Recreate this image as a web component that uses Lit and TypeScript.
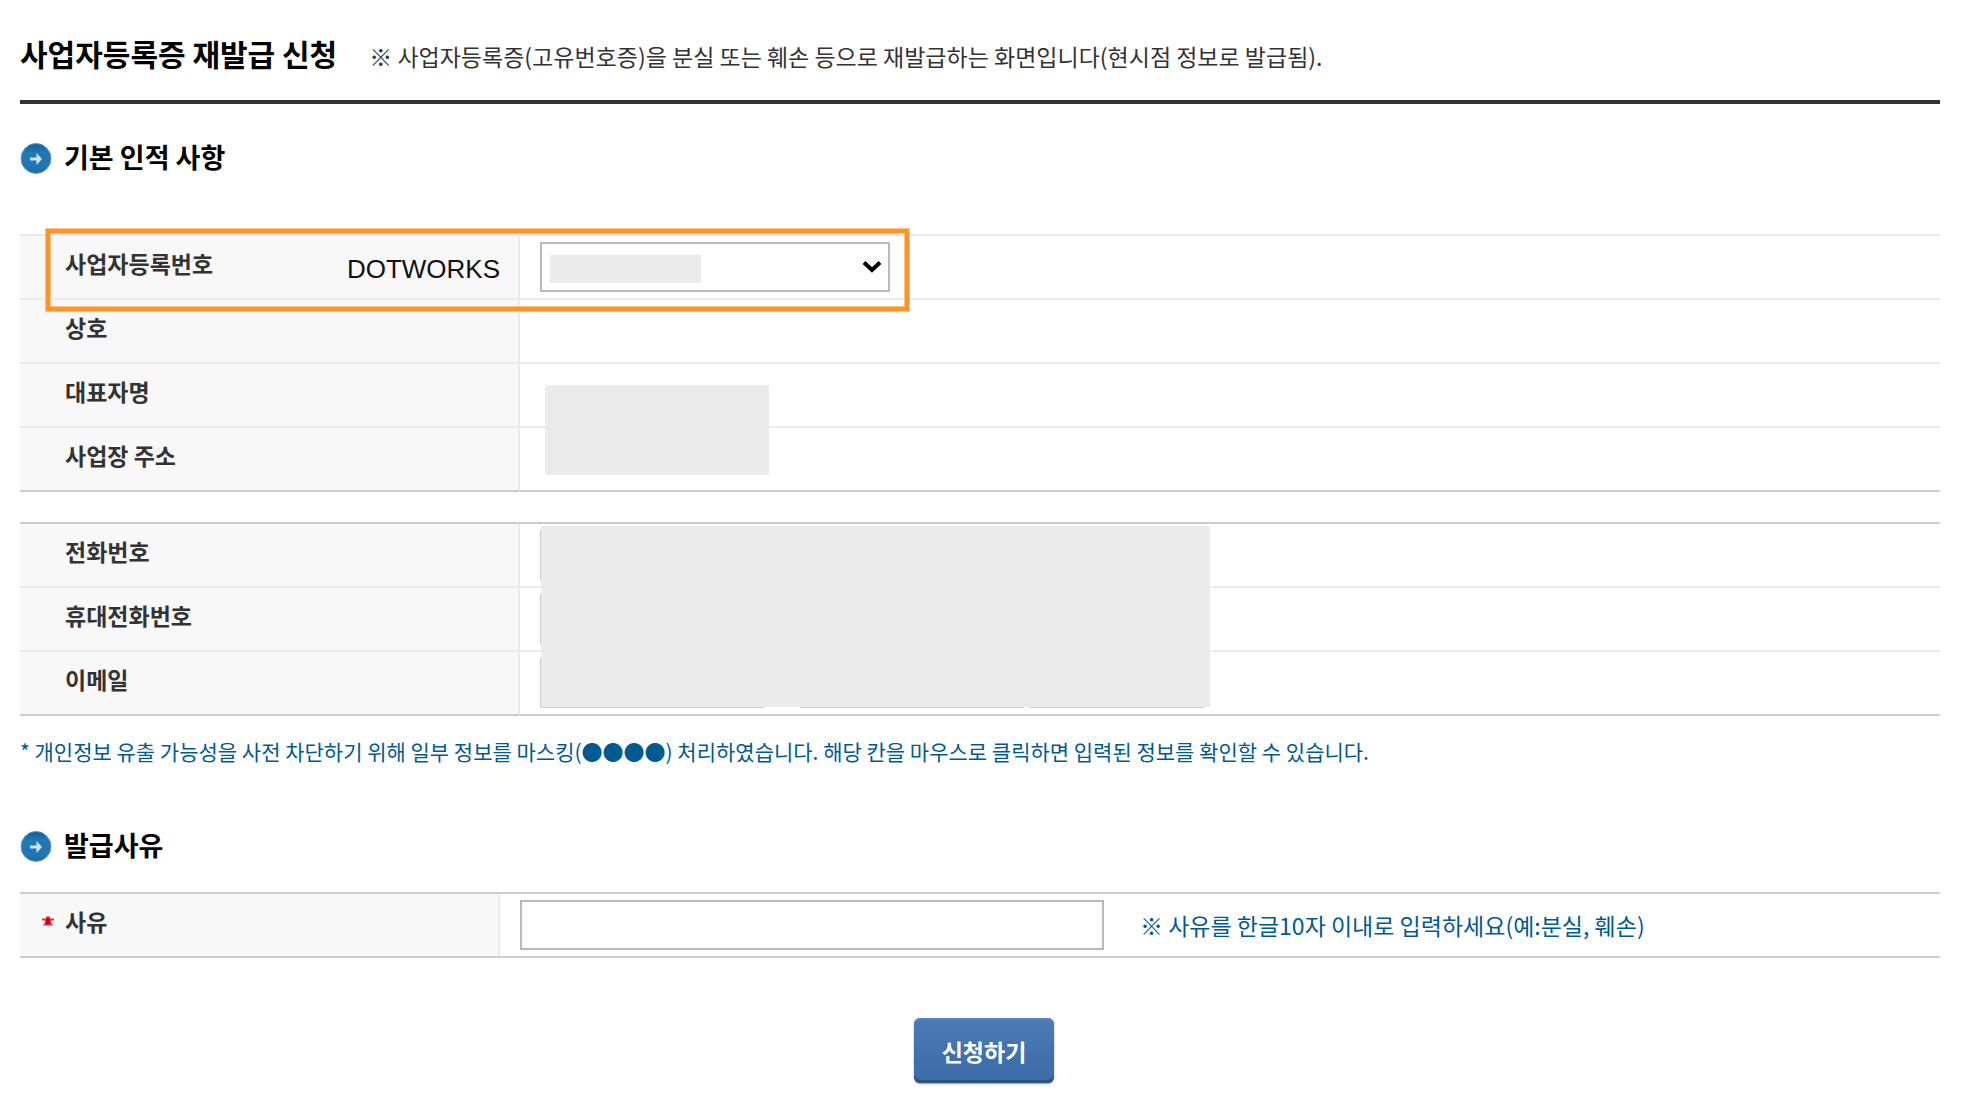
import { LitElement, html, css, svg } from "lit";
import { customElement, state } from "lit/decorators.js";

@customElement("section-heading")
class SectionHeading extends LitElement {
  static styles = css`
    :host {
      display: block;
    }
    .heading {
      display: flex;
      align-items: center;
      gap: 12px;
      margin: 0;
      height: 32px;
      font-size: 27px;
      line-height: 32px;
      font-weight: 700;
      color: #000;
    }
    .icon {
      width: 32px;
      height: 32px;
      flex: none;
    }
    .text {
      padding-bottom: 3px;
    }
  `;
  render() {
    return html`<h2 class="heading">
      <svg class="icon" viewBox="0 0 32 32" aria-hidden="true">
        <defs>
          <linearGradient id="g" x1="0" y1="0" x2="0" y2="1">
            <stop offset="0" stop-color="#17598c" />
            <stop offset="0.3" stop-color="#2278b5" />
            <stop offset="0.8" stop-color="#1f76b5" />
            <stop offset="1" stop-color="#1a65a0" />
          </linearGradient>
        </defs>
        <circle cx="16" cy="16.500" r="15" fill="url(#g)" stroke="#5c9bc9" stroke-width="1" />
        <path d="M10 15.500h6.500v-4.500l5.500 6-5.500 6v-4.500H10z" fill="#cfe4f3" />
      </svg>
      <span class="text"><slot></slot></span>
    </h2>`;
  }
}

@customElement("app-root")
class AppRoot extends LitElement {
  @state() reason = "";

  static styles = css`
    :host {
      display: block;
      box-sizing: border-box;
      padding: 30px 36px 18px 20px;
      background: #fff;
      color: #333;
      font-family: "Noto Sans CJK KR", "Liberation Sans", sans-serif;
      font-size: 23px;
      line-height: 32px;
    }
    .title-bar {
      display: flex;
      align-items: baseline;
      gap: 32px;
      height: 70px;
      border-bottom: 4px solid #333;
    }
    .title {
      margin: 0;
      font-size: 30px;
      line-height: 46px;
      font-weight: 700;
      color: #000;
    }
    .subtitle {
      margin: 0;
    }
    .first {
      margin-top: 38px;
    }
    .panel {
      position: relative;
    }
    .basic {
      margin-top: 60px;
    }
    .contact {
      margin-top: 30px;
    }
    .reason {
      margin-top: 30px;
    }
    table {
      width: 100%;
      border-collapse: separate;
      border-spacing: 0;
      table-layout: fixed;
      border-top: 2px solid #ccc;
    }
    .basic table {
      border-top-color: #ebebeb;
    }
    .label-col {
      width: 500px;
    }
    .reason .label-col {
      width: 480px;
    }
    th,
    td {
      box-sizing: border-box;
      height: 64px;
      padding: 0;
      border-bottom: 2px solid #ebebeb;
      vertical-align: middle;
    }
    tr:last-child th,
    tr:last-child td {
      border-bottom-color: #ccc;
    }
    th {
      padding: 0 18px 8px 45px;
      border-right: 2px solid #ebebeb;
      background: #f8f8f8;
      text-align: left;
      font-weight: 700;
    }
    td {
      padding: 0 20px;
    }
    .split {
      display: flex;
      align-items: center;
      justify-content: space-between;
    }
    .company {
      padding-top: 12px;
      font: 400 26px/32px "Liberation Sans", sans-serif;
      color: #111;
    }
    .required {
      display: flex;
      align-items: center;
      gap: 11px;
      margin-left: -23px;
    }
    .star {
      width: 12px;
      height: 10px;
    }
    .field-row {
      display: flex;
      align-items: center;
      gap: 6px;
    }
    .wide-gap {
      margin-left: 30px;
    }
    input,
    select {
      box-sizing: border-box;
      height: 50px;
      margin: 0;
      padding: 0 12px;
      border: 2px solid #b9b9b9;
      border-radius: 0;
      background: #fff;
      color: #333;
      font: inherit;
      appearance: none;
    }
    .select-wrap {
      position: relative;
      width: 350px;
    }
    .select-wrap select {
      display: block;
      width: 100%;
    }
    .chevron {
      position: absolute;
      right: 8px;
      top: 18px;
      width: 20px;
      height: 14px;
      pointer-events: none;
    }
    .short {
      width: 224px;
    }
    .domain {
      width: 174px;
    }
    .contact input,
    .contact select {
      border-color: #ccc;
    }
    .reason-input {
      width: 584px;
    }
    .hint {
      margin-left: 30px;
      color: #005a92;
    }
    .mask {
      position: absolute;
      background: #ebebeb;
      pointer-events: none;
    }
    .mask-number {
      left: 10px;
      top: 13px;
      width: 151px;
      height: 28px;
    }
    .mask-owner {
      left: 525px;
      top: 151px;
      width: 224px;
      height: 90px;
    }
    .mask-contact {
      left: 521px;
      top: 4px;
      width: 669px;
      height: 181px;
    }
    .highlight {
      position: absolute;
      left: 26px;
      top: -5px;
      box-sizing: border-box;
      width: 863px;
      height: 82px;
      border: 4px solid #ff9326;
      box-shadow: 0 0 0 1px #ffc488, inset 0 0 0 1px #ffc488;
      pointer-events: none;
    }
    .note {
      margin: 19px 0 0;
      font-size: 21px;
      color: #005a92;
    }
    .second {
      margin-top: 63px;
    }
    .actions {
      display: flex;
      justify-content: center;
      margin-top: 60px;
      padding-left: 8px;
    }
    .submit {
      width: 140px;
      height: 65px;
      padding: 0;
      border: 0;
      border-radius: 6px;
      background: linear-gradient(#4a7cb8, #3b6aa5);
      box-shadow: inset 0 -3px 0 #2b5183, inset 0 2px 0 #5585bd, 0 1px 2px #999;
      color: #fff;
      font: 700 23px/32px "Noto Sans CJK KR", sans-serif;
    }
  `;

  private onReason(e: Event) {
    this.reason = (e.target as HTMLInputElement).value;
  }

  render() {
    return html`
      <header class="title-bar">
        <h1 class="title">사업자등록증 재발급 신청</h1>
        <p class="subtitle">※ 사업자등록증(고유번호증)을 분실 또는 훼손 등으로 재발급하는 화면입니다(현시점 정보로 발급됨).</p>
      </header>

      <section-heading class="first">기본 인적 사항</section-heading>
      <div class="panel basic">
        <table>
          <colgroup><col class="label-col" /><col /></colgroup>
          <tbody>
            <tr>
              <th scope="row">
                <div class="split">
                  <label for="biz-no">사업자등록번호</label>
                  <span class="company">DOTWORKS</span>
                </div>
              </th>
              <td>
                <div class="select-wrap">
                  <select id="biz-no"><option></option></select>
                  <svg class="chevron" viewBox="0 0 20 14" aria-hidden="true">
                    ${svg`<path d="M2 2.500l8 7.500 8-7.500" fill="none" stroke="#000" stroke-width="4" />`}
                  </svg>
                  <span class="mask mask-number"></span>
                </div>
              </td>
            </tr>
            <tr><th scope="row">상호</th><td></td></tr>
            <tr><th scope="row">대표자명</th><td></td></tr>
            <tr><th scope="row">사업장 주소</th><td></td></tr>
          </tbody>
        </table>
        <span class="mask mask-owner"></span>
        <span class="highlight"></span>
      </div>

      <div class="panel contact">
        <table>
          <colgroup><col class="label-col" /><col /></colgroup>
          <tbody>
            <tr>
              <th scope="row"><label for="tel">전화번호</label></th>
              <td><div class="field-row"><input class="short" id="tel" type="tel" /></div></td>
            </tr>
            <tr>
              <th scope="row"><label for="mobile">휴대전화번호</label></th>
              <td><div class="field-row"><input class="short" id="mobile" type="tel" /></div></td>
            </tr>
            <tr>
              <th scope="row"><label id="email-label" for="email">이메일</label></th>
              <td>
                <div class="field-row">
                  <input class="short" id="email" type="text" />
                  <input class="short wide-gap" type="text" aria-labelledby="email-label" />
                  <select class="domain" aria-labelledby="email-label"><option></option></select>
                </div>
              </td>
            </tr>
          </tbody>
        </table>
        <span class="mask mask-contact"></span>
      </div>
      <p class="note">* 개인정보 유출 가능성을 사전 차단하기 위해 일부 정보를 마스킹(●●●●) 처리하였습니다. 해당 칸을 마우스로 클릭하면 입력된 정보를 확인할 수 있습니다.</p>

      <section-heading class="second">발급사유</section-heading>
      <div class="panel reason">
        <table>
          <colgroup><col class="label-col" /><col /></colgroup>
          <tbody>
            <tr>
              <th scope="row">
                <div class="required">
                  <svg class="star" viewBox="0 0 12 10" aria-hidden="true">
                    <path d="M4 0.500h4v2h4v2H9V7l1.500 1v1.500h-9V8L3 7V4.500H0v-2h4z" fill="#e0323a" />
                    <path d="M4 2h4v6H4z" fill="#d3000c" />
                  </svg>
                  <label for="reason">사유</label>
                </div>
              </th>
              <td>
                <div class="field-row">
                  <input class="reason-input" id="reason" type="text" maxlength="10" .value=${this.reason} @input=${this.onReason} />
                  <span class="hint">※ 사유를 한글10자 이내로 입력하세요(예:분실, 훼손)</span>
                </div>
              </td>
            </tr>
          </tbody>
        </table>
      </div>

      <div class="actions"><button class="submit" type="button">신청하기</button></div>
    `;
  }
}
